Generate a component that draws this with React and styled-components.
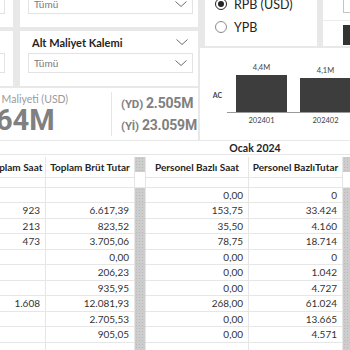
import React from "react";
import styled, { createGlobalStyle } from "styled-components";

const GlobalStyle = createGlobalStyle`
  html, body {
    margin: 0;
    padding: 0;
    background: #ffffff;
  }
  body {
    font-family: "Lato", "Liberation Sans", sans-serif;
    color: #252423;
  }
  * {
    box-sizing: border-box;
  }
`;

const Viewport = styled.div`
  width: 350px;
  height: 350px;
  overflow: hidden;
  background: #e8e8e8;
`;

const Dashboard = styled.div`
  width: 400px;
  margin: -28px 0 0 -30px;
  display: flex;
  flex-direction: column;
`;

const TopSection = styled.div`
  display: flex;
  gap: 2px;
  height: 168px;
`;

const LeftColumn = styled.div`
  width: 228px;
  display: flex;
  flex-direction: column;
  gap: 2px;
`;

const SlicerGrid = styled.div`
  display: grid;
  grid-template-columns: 43px 178px;
  grid-template-rows: 55px 55px;
  column-gap: 7px;
  row-gap: 4px;
`;

const SlicerCard = styled.div`
  background: #ffffff;
  padding: 0 ${(p) => p.$padRight || 5}px 0 8px;
  display: flex;
  flex-direction: column;
  min-width: 0;
  overflow: hidden;
`;

const SlicerHeader = styled.div`
  height: 22px;
  display: flex;
  align-items: center;
  gap: 4px;
  padding: 0 5px 0 4px;
  font-size: 11px;
  font-weight: 700;
  color: #252423;
`;

const SlicerBox = styled.div`
  height: 20px;
  border: 1px solid #e3e3e3;
  display: flex;
  align-items: center;
  gap: 4px;
  padding: 0 5px 0 5px;
  font-size: 10px;
  color: #7a7a7a;
`;

const ClipText = styled.span`
  flex: 1;
  min-width: 0;
  overflow: hidden;
  white-space: nowrap;
`;

const ChevronIcon = styled.svg`
  flex-shrink: 0;
`;

const KpiCard = styled.div`
  flex: 1;
  background: #ffffff;
  display: flex;
  align-items: center;
`;

const KpiMain = styled.div`
  width: 94px;
  display: flex;
  flex-direction: column;
  align-items: center;
  white-space: nowrap;
`;

const KpiLabel = styled.div`
  font-size: 10.5px;
  color: #9a9a9a;
  line-height: 13px;
`;

const KpiValue = styled.div`
  font-family: "Roboto", "Liberation Sans", sans-serif;
  font-size: 29px;
  font-weight: 700;
  color: #808080;
  line-height: 29px;
`;

const KpiDivider = styled.div`
  width: 1px;
  height: 44px;
  margin-left: 47px;
  background: #e6e6e6;
`;

const KpiSide = styled.div`
  padding-left: 9px;
  display: flex;
  flex-direction: column;
  gap: 6px;
`;

const KpiSideLine = styled.div`
  font-family: "Roboto", "Liberation Sans", sans-serif;
  font-weight: 700;
  font-size: 14px;
  color: #808080;
  white-space: nowrap;
  letter-spacing: -0.2px;
  span {
    font-size: 11.5px;
    margin-right: 3px;
  }
`;

const RightColumn = styled.div`
  width: 170px;
  display: flex;
  flex-direction: column;
  gap: 2px;
`;

const TopCards = styled.div`
  height: 77px;
  display: flex;
  gap: 6px;
  padding-left: 5px;
`;

const RadioCard = styled.div`
  width: 112px;
  background: #ffffff;
  display: flex;
  flex-direction: column;
  justify-content: flex-end;
  gap: 11px;
  padding: 0 0 13px 10px;
`;

const RadioRow = styled.div`
  display: flex;
  align-items: center;
  gap: 7px;
  height: 12px;
  font-size: 12.5px;
  color: #252423;
`;

const RadioDot = styled.div`
  width: 12px;
  height: 12px;
  border-radius: 50%;
  border: 1px solid ${(p) => (p.$checked ? "#252423" : "#8a8a8a")};
  display: flex;
  align-items: center;
  justify-content: center;
  &::after {
    content: "";
    width: 6px;
    height: 6px;
    border-radius: 50%;
    background: ${(p) => (p.$checked ? "#252423" : "transparent")};
  }
`;

const ButtonCard = styled.div`
  flex: 1;
  background: #ffffff;
  display: flex;
  flex-direction: column;
`;

const OutlineButton = styled.div`
  height: 41px;
  margin-left: 20px;
  border: 1px solid #c4c4c4;
  border-top: none;
`;

const CardRule = styled.div`
  height: 1px;
  margin-top: 7px;
  background: #ececec;
`;

const DarkButton = styled.div`
  height: 20px;
  margin: 4px 0 0 20px;
  background: #333333;
`;

const ChartPanel = styled.div`
  flex: 1;
  background: #ffffff;
`;

const TableGrid = styled.div`
  margin-top: 1px;
  width: 394px;
  background: #ffffff;
  display: grid;
  grid-template-columns: 76px 89px 11px 103px 94px 21px;
  grid-auto-rows: 15.5px;
  font-size: 10px;
`;

const GroupCell = styled.div`
  grid-column: ${(p) => p.$span};
  height: 14px;
  display: flex;
  align-items: center;
  justify-content: center;
  font-size: 10.5px;
  font-weight: 700;
  color: #252423;
  border-bottom: 1px solid #e6e6e6;
`;

const HeaderCell = styled.div`
  height: 21.5px;
  display: flex;
  align-items: center;
  justify-content: center;
  padding-left: ${(p) => p.$indent || 0}px;
  font-weight: 700;
  white-space: nowrap;
  color: #252423;
  border-right: 1px solid #e6e6e6;
  border-bottom: 1px solid #e6e6e6;
`;

const Cell = styled.div`
  display: flex;
  align-items: center;
  justify-content: flex-end;
  padding-right: 5px;
  color: #333333;
  white-space: nowrap;
  border-right: 1px solid #e6e6e6;
  border-bottom: 1px solid #e6e6e6;
`;

const Gutter = styled.div`
  height: ${(p) => (p.$tall ? "21.5px" : "auto")};
  border-bottom: 1px solid ${(p) => (p.$blank ? "#e6e6e6" : "#c9c9c9")};
  border-right: 1px solid #e6e6e6;
  background-color: ${(p) => (p.$blank ? "#ffffff" : "#cdcdcd")};
  background-image: ${(p) =>
    p.$blank ? "none" : "radial-gradient(#b9b9b9 0.6px, transparent 0.8px)"};
  background-size: 3px 3px;
`;

const Chevron = () => (
  <ChevronIcon width="12" height="6" viewBox="0 0 12 6">
    <polyline points="0.5,0.5 6,5.5 11.5,0.5" fill="none" stroke="#6b6b6b" strokeWidth="1" />
  </ChevronIcon>
);

const BarChart = () => (
  <svg width="170" height="89" viewBox="0 0 170 89">
    <g fontFamily="Lato, 'Liberation Sans', sans-serif" fontSize="7.5" fill="#444" textAnchor="middle">
      <text x="61.5" y="22">4,4M</text>
      <text x="125.5" y="25">4,1M</text>
      <text x="61.5" y="75">202401</text>
      <text x="125.5" y="75">202402</text>
      <text x="17.5" y="50" fontSize="7" fontWeight="700">AC</text>
    </g>
    <rect x="36" y="27" width="51" height="37" fill="#3d3d3d" />
    <rect x="100" y="30" width="51" height="34" fill="#3d3d3d" />
    <line x1="27" y1="64.5" x2="170" y2="64.5" stroke="#9a9a9a" strokeWidth="1" />
  </svg>
);

const Slicer = ({ label, padRight }) => (
  <SlicerCard $padRight={padRight}>
    <SlicerHeader>
      <ClipText>{label}</ClipText>
      <Chevron />
    </SlicerHeader>
    <SlicerBox>
      <ClipText>Tümü</ClipText>
      <Chevron />
    </SlicerBox>
  </SlicerCard>
);

const rows = [
  ["", "", "", ""],
  ["", "", "0,00", "0"],
  ["923", "6.617,39", "153,75", "33.424"],
  ["213", "823,52", "35,50", "4.160"],
  ["473", "3.705,06", "78,75", "18.714"],
  ["", "0,00", "0,00", "0"],
  ["", "206,23", "0,00", "1.042"],
  ["", "935,95", "0,00", "4.727"],
  ["1.608", "12.081,93", "268,00", "61.024"],
  ["", "2.705,53", "0,00", "13.665"],
  ["", "905,05", "0,00", "4.571"],
  ["", "", "", ""],
];

const App = () => {
  return (
    <>
      <GlobalStyle />
      <Viewport>
        <Dashboard>
          <TopSection>
            <LeftColumn>
              <SlicerGrid>
                <Slicer label="Maliyet Merkezi" padRight={8} />
                <Slicer label="Maliyet Kalemi" />
                <Slicer label="Departman" padRight={8} />
                <Slicer label="Alt Maliyet Kalemi" />
              </SlicerGrid>
              <KpiCard>
                <KpiMain>
                  <KpiLabel>Toplam Maliyeti (USD)</KpiLabel>
                  <KpiValue>564M</KpiValue>
                </KpiMain>
                <KpiDivider />
                <KpiSide>
                  <KpiSideLine>
                    <span>(YD)</span>2.505M
                  </KpiSideLine>
                  <KpiSideLine>
                    <span>(Yİ)</span>23.059M
                  </KpiSideLine>
                </KpiSide>
              </KpiCard>
            </LeftColumn>
            <RightColumn>
              <TopCards>
                <RadioCard>
                  <RadioRow>
                    <RadioDot $checked />
                    RPB (USD)
                  </RadioRow>
                  <RadioRow>
                    <RadioDot />
                    YPB
                  </RadioRow>
                </RadioCard>
                <ButtonCard>
                  <OutlineButton />
                  <CardRule />
                  <DarkButton />
                </ButtonCard>
              </TopCards>
              <ChartPanel>
                <BarChart />
              </ChartPanel>
            </RightColumn>
          </TopSection>

          <TableGrid>
            <GroupCell $span="1 / 4" />
            <GroupCell $span="4 / 7">Ocak 2024</GroupCell>

            <HeaderCell $indent={16}>Toplam Saat</HeaderCell>
            <HeaderCell>Toplam Brüt Tutar</HeaderCell>
            <Gutter $tall />
            <HeaderCell>Personel Bazlı Saat</HeaderCell>
            <HeaderCell>Personel BazlıTutar</HeaderCell>
            <Gutter $tall />

            {rows.map((r, i) => (
              <React.Fragment key={i}>
                <Cell>{r[0]}</Cell>
                <Cell>{r[1]}</Cell>
                <Gutter $blank={i === 0} />
                <Cell>{r[2]}</Cell>
                <Cell>{r[3]}</Cell>
                <Gutter $blank={i === 0} />
              </React.Fragment>
            ))}
          </TableGrid>
        </Dashboard>
      </Viewport>
    </>
  );
};

export default App;
